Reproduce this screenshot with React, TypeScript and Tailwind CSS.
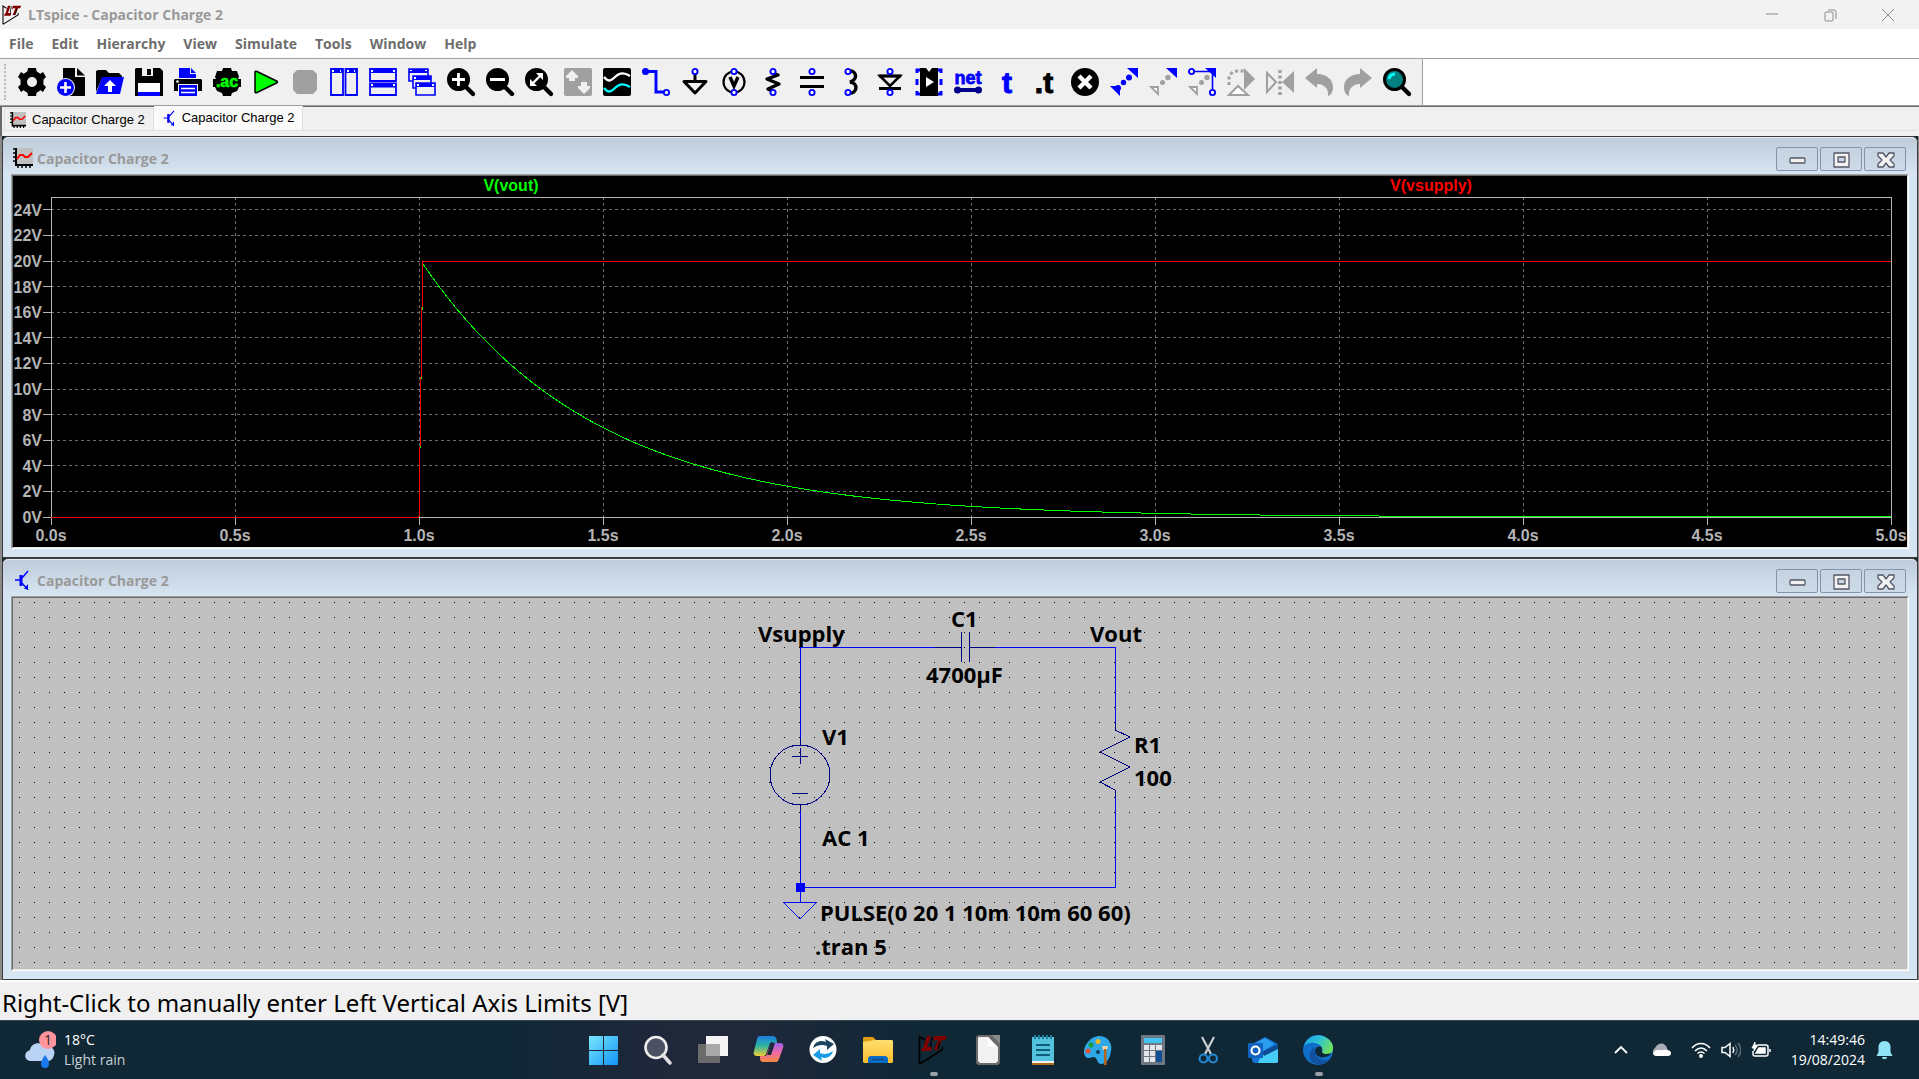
import React from 'react';
import type { ReactNode } from 'react';

const BLUE = '#0000ff';
const GRAY = '#a0a0a0';

const menus = ['File', 'Edit', 'Hierarchy', 'View', 'Simulate', 'Tools', 'Window', 'Help'];

/* ---------- small logos ---------- */

const LtLogo = ({ className }: { className: string }) => (
    <svg viewBox="0 0 30 30" className={className} fill="none">
        <path d="M1.5 29V1.5L7 5M1.5 29L24 15l.5-3" stroke="#000" strokeWidth="1.6" />
        <path d="M9 1h4L9 12h5l-1 4H3l1-3h1zM16 1h13l-2 4h-3l-4 10h-4l4-10h-3l-2 2z" fill="#800000" />
        <path d="M13 12c-1-4 0-7 2-10M20 14l2-8" stroke="#000" strokeWidth="1.2" />
    </svg>
);

const WaveIcon = ({ className }: { className: string }) => (
    <svg viewBox="0 0 20 20" className={className} fill="none">
        <path d="M4 0h16v16H4z" fill="#c0c0c0" />
        <path d="M3 0v18M2 17h18" stroke="#000" strokeWidth="2" />
        <path d="M0 1h3M0 5h3M0 9h3M0 13h3M5 17v3M9 17v3M13 17v3M17 17v3" stroke="#000" strokeWidth="1.5" />
        <path d="M4 11l3-4h3l2 2h3l4-4" stroke="#f00" strokeWidth="2" />
    </svg>
);

const TransistorIcon = ({ className }: { className: string }) => (
    <svg viewBox="0 0 20 20" className={className} fill="none" stroke={BLUE}>
        <path d="M2 10h6M9 8l6-7M9 13l6 7" strokeWidth="1.4" />
        <path d="M8 5v11" strokeWidth="3" />
        <path d="M15 14v5h-4z" fill={BLUE} stroke="none" />
    </svg>
);

/* ---------- toolbar ---------- */

const Pin = ({ x = 14, y }: { x?: number; y: number }) => (
    <circle cx={x} cy={y} r="2.6" fill="#fff" stroke={BLUE} strokeWidth="1.9" />
);

const Lens = ({ children, fill = '#000' }: { children?: ReactNode; fill?: string }) => (
    <>
        <path d="M18 18l8 8" stroke="#000" strokeWidth="4.4" strokeLinecap="round" />
        <circle cx="11.5" cy="11.5" r="10" fill={fill} stroke="#000" strokeWidth="3" />
        {children}
    </>
);

const tools: { name: string; icon: ReactNode }[] = [
    {
        name: 'Settings',
        icon: (
            <>
                <g fill="#000">
                    <circle cx="14" cy="14" r="11.5" />
                    <path d="M10 0h8l1 6H9zM10 28h8l1-6H9zM0 9l3-5 6 4-4 6zM28 9l-3-5-6 4 4 6zM0 19l3 5 6-4-4-6zM28 19l-3 5-6-4 4-6z" />
                </g>
                <circle cx="14" cy="14" r="5" fill="#f0f0f0" />
            </>
        ),
    },
    {
        name: 'New schematic',
        icon: (
            <>
                <path d="M6 0h12v9h10v19H6z" fill="#000" />
                <path d="M20 0l8 7.5h-8z" fill="#000" />
                <circle cx="8.5" cy="19.5" r="9.5" fill="#f0f0f0" />
                <circle cx="8.5" cy="19.5" r="8.5" fill={BLUE} />
                <path d="M8.5 14v11M3 19.5h11" stroke="#fff" strokeWidth="2.6" />
            </>
        ),
    },
    {
        name: 'Open',
        icon: (
            <>
                <path d="M0 24V3l2-1h8l3 3h10l3 3v2H6z" fill="#000" />
                <path d="M6 9h22l-4 17H0z" fill={BLUE} />
                <path d="M14 12l6 6h-4v6h-4v-6H8z" fill="#fff" />
            </>
        ),
    },
    {
        name: 'Save',
        icon: (
            <>
                <path d="M0 1l1-1h24l3 3v25H0z" fill="#000" />
                <path d="M7 0h11v8H7z" fill="#f0f0f0" />
                <path d="M12 1h4v6h-4z" fill="#000" />
                <path d="M3 15h22v9H3z" fill="#fff" />
                <path d="M3 24h22v4H3z" fill={BLUE} />
            </>
        ),
    },
    {
        name: 'Print',
        icon: (
            <>
                <path d="M5 0h11v6h6v4H5z" fill={BLUE} />
                <path d="M17 0l5 5h-5z" fill={BLUE} />
                <path d="M1 11h26l1 1v11h-4v-7H4v7H0V12z" fill="#000" />
                <circle cx="3.5" cy="13.5" r="1.3" fill="#fff" />
                <path d="M5 17h18v11H5z" fill={BLUE} />
                <path d="M7 20.5h14M7 24.5h14" stroke="#fff" strokeWidth="1.4" />
            </>
        ),
    },
    {
        name: 'Configure analysis',
        icon: (
            <>
                <path d="M10 0h8l1 3h5l2 6-1 2h3v8h-2l-2 4-5 2-1 3h-8l-1-3-5-2-2-4H0v-8h3L2 9l2-6h5z" fill="#000" />
                <text
                    x="14"
                    y="19"
                    textAnchor="middle"
                    fontSize="16"
                    fontWeight="bold"
                    fill="#0f0"
                    stroke="#0f0"
                    strokeWidth="0.6"
                    fontFamily="Liberation Sans, sans-serif"
                >
                    .ac
                </text>
            </>
        ),
    },
    {
        name: 'Run',
        icon: <path d="M3 4.5q0-2 2-1l19.500 9.500q2 1 0 2L5 24.500q-2 1-2-1z" fill="#0f0" stroke="#000" strokeWidth="1.5" />,
    },
    {
        name: 'Stop',
        icon: <path d="M6 2h16l4 4v16l-4 4H6l-4-4V6z" fill={GRAY} />,
    },
    {
        name: 'Tile vertically',
        icon: (
            <>
                <path d="M1 1h12v26H1zM15.5 1H27v26H15.5z" fill="#f0f0f0" stroke={BLUE} strokeWidth="1.8" />
                <path d="M1 1h12v4H1zM15.5 1H27v4H15.5z" fill={BLUE} />
                <path d="M2 2h2v2H2zM17 2h2v2h-2zM10 2h1v2h-1zM24 2h1v2h-1z" fill="#fff" />
            </>
        ),
    },
    {
        name: 'Tile horizontally',
        icon: (
            <>
                <path d="M1 1h26v12H1zM1 15.5h26V27H1z" fill="#f0f0f0" stroke={BLUE} strokeWidth="1.8" />
                <path d="M1 1h26v4H1zM1 15.5h26v4H1z" fill={BLUE} />
                <path d="M2 2h2v2H2zM2 16h2v2H2zM24 2h2v2h-2zM24 16h2v2h-2z" fill="#fff" />
            </>
        ),
    },
    {
        name: 'Cascade',
        icon: (
            <>
                <g fill="#f0f0f0" stroke={BLUE} strokeWidth="1.6">
                    <path d="M1 1h19v12H1z" />
                    <path d="M5 8h18v12H5z" />
                    <path d="M8 15h19v12H8z" />
                </g>
                <path d="M1 1h19v4H1zM5 8h18v4H5zM8 15h19v4H8z" fill={BLUE} />
                <path d="M2 2h2v1H2zM6 9h2v2H6zM9 16h2v2H9zM17 2h2v1h-2zM24 16h2v2h-2z" fill="#fff" />
            </>
        ),
    },
    {
        name: 'Zoom in',
        icon: (
            <Lens>
                <path d="M11.5 5v13M5 11.5h13" stroke="#fff" strokeWidth="2.8" />
            </Lens>
        ),
    },
    {
        name: 'Zoom out',
        icon: (
            <Lens>
                <path d="M4 11.5h15" stroke="#fff" strokeWidth="3" />
            </Lens>
        ),
    },
    {
        name: 'Zoom to fit',
        icon: (
            <Lens>
                <path d="M8 15l7-7" stroke="#fff" strokeWidth="2.4" />
                <path d="M11 5h7v7zM5 11v7h7z" fill="#fff" />
            </Lens>
        ),
    },
    {
        name: 'Autorange',
        icon: (
            <>
                <rect width="28" height="28" rx="2" fill={GRAY} />
                <path d="M8 2l6 6v2h-3v3H5v-3H2V8zM20 26l-6-6v-2h3v-4h6v4h3v2z" fill="#f0f0f0" />
            </>
        ),
    },
    {
        name: 'Waveform viewer',
        icon: (
            <>
                <rect width="28" height="28" rx="2" fill="#000" />
                <path d="M1 9c5 6 8 3 11 0s7-6 15-1" fill="none" stroke="#fff" strokeWidth="2.4" />
                <path d="M1 20c5 6 8 3 11 0s7-6 15-1" fill="none" stroke="#0ff" strokeWidth="2.4" />
            </>
        ),
    },
    {
        name: 'Wire',
        icon: (
            <>
                <path d="M3 3.5h11V24h8" fill="none" stroke={BLUE} strokeWidth="3" />
                <circle cx="3.5" cy="3.5" r="3.5" fill={BLUE} />
                <Pin x={24.5} y={24.5} />
            </>
        ),
    },
    {
        name: 'Ground',
        icon: (
            <>
                <path d="M14 5v9" stroke="#000" strokeWidth="3" />
                <path d="M3 13.5h22L14 25z" fill="none" stroke="#000" strokeWidth="3" strokeLinejoin="round" />
                <Pin y={3.5} />
            </>
        ),
    },
    {
        name: 'Voltage source',
        icon: (
            <>
                <circle cx="14" cy="14" r="10.5" fill="none" stroke="#000" strokeWidth="2.2" />
                <path d="M10 9l4 9 4-9" fill="none" stroke="#000" strokeWidth="3.4" />
                <Pin y={3.5} />
                <Pin y={24.5} />
            </>
        ),
    },
    {
        name: 'Resistor',
        icon: (
            <>
                <path d="M14 5l5 2-11 4 12 5-11 5 6 3" fill="none" stroke="#000" strokeWidth="3.4" strokeLinejoin="round" />
                <Pin y={3.5} />
                <Pin y={24.5} />
            </>
        ),
    },
    {
        name: 'Capacitor',
        icon: (
            <>
                <path d="M2 9.5h24M2 18.5h24" stroke="#000" strokeWidth="3.2" />
                <Pin y={3.5} />
                <Pin y={24.5} />
            </>
        ),
    },
    {
        name: 'Inductor',
        icon: (
            <>
                <path d="M12 3c8-1 9 9 1 11c9 1 7 12-1 11" fill="none" stroke="#000" strokeWidth="3.4" />
                <Pin x={11} y={3.5} />
                <Pin x={11} y={24.5} />
            </>
        ),
    },
    {
        name: 'Diode',
        icon: (
            <>
                <path d="M4 8h20l-10 10z" fill="none" stroke="#000" strokeWidth="2.6" />
                <path d="M3 8h22M3 20.5h22" stroke="#000" strokeWidth="3" />
                <Pin y={3.5} />
                <Pin y={24.5} />
            </>
        ),
    },
    {
        name: 'Component',
        icon: (
            <>
                <path d="M2 5V2h4M2 11v6M2 23v3h4M26 5V2h-4M26 11v6M26 23v3h-4" fill="none" stroke={BLUE} strokeWidth="3" />
                <path d="M5 0h6l3 4 3-4h6v28H5z" fill="#000" />
                <path d="M11 9v10l8-5z" fill="#fff" />
            </>
        ),
    },
    {
        name: 'Net name',
        icon: (
            <>
                <text
                    x="14"
                    y="16"
                    textAnchor="middle"
                    fontSize="18"
                    fontWeight="bold"
                    fill={BLUE}
                    stroke={BLUE}
                    strokeWidth="0.8"
                    fontFamily="Liberation Sans, sans-serif"
                >
                    net
                </text>
                <path d="M3 22h22" stroke="#00008b" strokeWidth="4" />
                <circle cx="3.5" cy="22" r="3.5" fill="#00008b" />
                <circle cx="24.5" cy="22" r="3.5" fill="#00008b" />
            </>
        ),
    },
    {
        name: 'Text',
        icon: (
            <text
                x="14"
                y="25"
                textAnchor="middle"
                fontSize="30"
                fontWeight="bold"
                fill={BLUE}
                stroke={BLUE}
                fontFamily="Liberation Sans, sans-serif"
            >
                t
            </text>
        ),
    },
    {
        name: 'SPICE directive',
        icon: (
            <text
                x="12"
                y="25"
                textAnchor="middle"
                fontSize="30"
                fontWeight="bold"
                fill="#000"
                stroke="#000"
                fontFamily="Liberation Sans, sans-serif"
            >
                .t
            </text>
        ),
    },
    {
        name: 'Delete',
        icon: (
            <>
                <circle cx="14" cy="14" r="14" fill="#000" />
                <path d="M8 8l12 12M20 8L8 20" stroke="#fff" strokeWidth="4.4" />
            </>
        ),
    },
    {
        name: 'Move',
        icon: (
            <g fill={BLUE}>
                <path d="M17 0h11v10zM0 18h10v10z" />
                <circle cx="19" cy="9.5" r="3" />
                <circle cx="13.5" cy="14.5" r="2.7" />
                <circle cx="8" cy="20" r="3" />
            </g>
        ),
    },
    {
        name: 'Copy',
        icon: (
            <>
                <path d="M17 0h11v10z" fill={BLUE} />
                <g fill={GRAY}>
                    <circle cx="19" cy="9.5" r="2.7" />
                    <circle cx="13.5" cy="14.5" r="2.5" />
                </g>
                <path d="M2 19h7v7z" fill="#fff" stroke={GRAY} strokeWidth="1.8" />
            </>
        ),
    },
    {
        name: 'Drag',
        icon: (
            <>
                <path d="M17 0h11v10z" fill={BLUE} />
                <path d="M4 3.5h20.5V24" fill="none" stroke={BLUE} strokeWidth="1.6" />
                <g fill={GRAY}>
                    <circle cx="19" cy="9.5" r="2.7" />
                    <circle cx="13.5" cy="14.5" r="2.5" />
                </g>
                <path d="M2 19h7v7z" fill="#fff" stroke={GRAY} strokeWidth="1.8" />
                <Pin x={3.5} y={3.5} />
                <Pin x={24.5} y={24.5} />
            </>
        ),
    },
    {
        name: 'Rotate',
        icon: (
            <>
                <path d="M17 0l11 11-11 11z" fill={GRAY} />
                <path d="M2 17v-6c0-5 4-8 9-8h6" fill="none" stroke={GRAY} strokeWidth="3" strokeDasharray="3 2.5" />
                <path d="M2 27l9-9 10 9z" fill="#fff" stroke={GRAY} strokeWidth="2" />
            </>
        ),
    },
    {
        name: 'Mirror',
        icon: (
            <>
                <path d="M14 2v25" stroke={GRAY} strokeWidth="3.5" strokeDasharray="3 2.5" />
                <path d="M1 5l9 9-9 10z" fill="#f0f0f0" stroke={GRAY} strokeWidth="2" />
                <path d="M28 3v22L16 14z" fill={GRAY} />
            </>
        ),
    },
    {
        name: 'Undo',
        icon: <path d="M0 10L12 0v6c10 0 16 6 16 13 0 5-2 8-5 9 1-6-3-12-11-12v4z" fill={GRAY} />,
    },
    {
        name: 'Redo',
        icon: <path d="M28 10L16 0v6C6 6 0 12 0 19c0 5 2 8 5 9-1-6 3-12 11-12v4z" fill={GRAY} />,
    },
    {
        name: 'Find',
        icon: (
            <Lens fill="#008080">
                <path d="M6 11q1-5 6-5" fill="none" stroke="#0ff" strokeWidth="3" />
            </Lens>
        ),
    },
];

const Toolbar = () => (
    <div className="flex h-12 shrink-0 border-b border-[#696969] bg-white">
        <div className="flex items-center gap-[11px] border-b border-r border-[#a0a0a0] bg-[#f0f0f0] pr-[11px]">
            <span className="ml-1 h-9 w-[3px] border-l-2 border-dotted border-[#b8b8b8]" />
            {tools.map((tool) => (
                <button key={tool.name} aria-label={tool.name} className="size-7">
                    <svg viewBox="0 0 28 28" className="size-7 overflow-visible">
                        {tool.icon}
                    </svg>
                </button>
            ))}
        </div>
        <div className="flex-1 border-b border-[#a0a0a0]" />
    </div>
);

/* ---------- MDI child window ---------- */

const frameButtons = [
    { name: 'Minimize', icon: <rect x="3" y="9" width="15" height="5" rx="1" /> },
    { name: 'Restore', icon: <path fillRule="evenodd" d="M3 4h15v14H3zM7 8h7v5H7z" /> },
    {
        name: 'Close',
        icon: <path d="M3 4h5l3 4 3-4h5v3l-4 4 4 4v3h-5l-3-4-3 4H3v-3l4-4-4-4z" />,
    },
];

const ChildWindow = ({ icon, children }: { icon: ReactNode; children: ReactNode }) => (
    <section className="flex flex-1 flex-col rounded-t-md border border-[#3c3c3c] bg-[#d7e4f2] px-2 pb-2">
        <header className="-mx-2 flex h-[37px] shrink-0 items-center rounded-t-md border-t border-[#e4ecf5] bg-linear-to-b from-[#bfccda] to-[#d7e4f2] pl-[10px] pr-[11px]">
            {icon}
            <h2 className="ml-1 flex-1 pt-[6px] font-['Open_Sans',sans-serif] text-[14px] font-bold leading-5 text-[#999]">
                Capacitor Charge 2
            </h2>
            <div className="flex gap-[2px] pt-[6px]">
                {frameButtons.map((b) => (
                    <button
                        key={b.name}
                        aria-label={b.name}
                        className="flex h-6 w-[42px] items-center justify-center rounded-[2px] border border-[#8593ad] bg-[#c6d3e1]/50"
                    >
                        <svg viewBox="0 0 21 21" className="size-[21px]" fill="#f2f2f2" stroke="#535666" strokeWidth="1.3" strokeLinejoin="round">
                            {b.icon}
                        </svg>
                    </button>
                ))}
            </div>
        </header>
        <div className="flex flex-1 border border-b-white border-l-[#a0a0a0] border-r-white border-t-[#a0a0a0]">
            <div className="flex flex-1 border border-b-[#e3e3e3] border-l-[#696969] border-r-[#e3e3e3] border-t-[#696969]">{children}</div>
        </div>
    </section>
);

/* ---------- waveform plot ---------- */

const X_MAX = 5;
const Y_MAX = 25;
const TAU = 0.47; // R * C

const px = (t: number) => `${(t / X_MAX) * 100}%`;
const py = (v: number) => `${(1 - v / Y_MAX) * 100}%`;

const times = Array.from({ length: 11 }, (_, i) => i * 0.5);
const volts = Array.from({ length: 13 }, (_, i) => i * 2);

const decay = Array.from({ length: 200 }, (_, i) => {
    const t = 1.01 + i * 0.02;
    return `${t.toFixed(2)},${(Y_MAX - 19.8 * Math.exp(-(t - 1.01) / TAU)).toFixed(3)}`;
});

const Plot = () => (
    <div className="flex flex-1 bg-black pb-[30px] pl-[38px] pr-4 pt-[21px]">
        <svg
            className="block h-auto w-full overflow-visible font-['Liberation_Sans',Arial,sans-serif] text-[16px] font-bold"
            shapeRendering="crispEdges"
        >
            {volts.map((v) => (
                <g key={v}>
                    {v > 0 && <line x1="0" x2="100%" y1={py(v)} y2={py(v)} stroke="#6e6e6e" strokeDasharray="3 3" />}
                    <line x1="-8" x2="0" y1={py(v)} y2={py(v)} stroke="#b4b4b4" />
                    <text x="-9" y={py(v)} dy="6" textAnchor="end" fill="#b4b4b4">
                        {v}V
                    </text>
                </g>
            ))}
            {times.map((t) => (
                <g key={t}>
                    <line x1={px(t)} x2={px(t)} y1="0" y2="100%" stroke="#6e6e6e" strokeDasharray="3 3" />
                    <svg x={px(t)} y="100%" className="overflow-visible">
                        <line y2="8" stroke="#b4b4b4" />
                        <text y="24" textAnchor="middle" fill="#b4b4b4">
                            {t.toFixed(1)}s
                        </text>
                    </svg>
                </g>
            ))}
            <rect width="100%" height="100%" fill="none" stroke="#b4b4b4" />
            <svg width="100%" height="100%" viewBox="0 0 5 25" preserveAspectRatio="none" className="overflow-visible" fill="none">
                <polyline points={`0,25 1,25 ${decay.join(' ')} 5,25`} stroke="#00ff00" vectorEffect="non-scaling-stroke" />
                <polyline points="0,25 1,25 1.01,5 5,5" stroke="#ff0000" vectorEffect="non-scaling-stroke" />
            </svg>
            <text x="25%" y="-6" textAnchor="middle" fill="#00ff00">
                V(vout)
            </text>
            <text x="75%" y="-6" textAnchor="middle" fill="#ff0000">
                V(vsupply)
            </text>
        </svg>
    </div>
);

/* ---------- schematic ---------- */

const labels = [
    { text: 'Vsupply', x: -202, y: 44 },
    { text: 'C1', x: -9, y: 29 },
    { text: 'Vout', x: 130, y: 44 },
    { text: '4700µF', x: -34, y: 85 },
    { text: 'V1', x: -138, y: 147 },
    { text: 'R1', x: 174, y: 155 },
    { text: '100', x: 174, y: 188 },
    { text: 'AC 1', x: -138, y: 248 },
    { text: 'PULSE(0 20 1 10m 10m 60 60)', x: -140, y: 323 },
    { text: '.tran 5', x: -145, y: 357 },
];

const Schematic = () => (
    <div className="flex flex-1 bg-[#c0c0c0]">
        <svg className="block h-auto w-full overflow-hidden">
            <pattern id="grid" width="15" height="15" patternUnits="userSpaceOnUse">
                <rect x="6" y="4" width="1" height="1" fill="#000" />
            </pattern>
            <rect width="100%" height="100%" fill="url(#grid)" />
            <svg x="50%" className="overflow-visible" fill="none" shapeRendering="crispEdges">
                <path d="M-160 140V49H-25M35 49H155V125M155 199V289H-160M-160 206V304" stroke={BLUE} />
                <path d="M-177 304h34l-17 17z" stroke={BLUE} />
                <rect x="-164" y="285" width="9" height="9" fill={BLUE} />
                <g stroke="#000080">
                    <path d="M-25 49H1M9 49H35M1 34v30M9 34v30" />
                    <path d="M-160 140v7M-160 206v7M-168 158h16M-160 150v16M-168 195h16" />
                    <circle cx="-160" cy="177" r="30" />
                    <path d="M155 125v7l15 7-30 15 30 15-30 15 15 8v7" />
                </g>
                <g className="font-['Open_Sans',sans-serif] text-[22px] font-bold" fill="#000">
                    {labels.map((l) => (
                        <text key={l.text} x={l.x} y={l.y}>
                            {l.text}
                        </text>
                    ))}
                </g>
            </svg>
        </svg>
    </div>
);

/* ---------- taskbar ---------- */

const apps: { name: string; open?: boolean; icon: ReactNode }[] = [
    {
        name: 'Start',
        icon: <path d="M1 1h14v14H1zM16 1h14v14H16zM1 16h14v14H1zM16 16h14v14H16z" fill="url(#win)" />,
    },
    {
        name: 'Search',
        icon: (
            <>
                <circle cx="13" cy="12.5" r="10.5" fill="#4a5263" stroke="#eee" strokeWidth="2.6" />
                <path d="M20 20l7 8" stroke="#e0e0e0" strokeWidth="3.5" strokeLinecap="round" />
            </>
        ),
    },
    {
        name: 'Task view',
        icon: (
            <>
                <path d="M8 1h22v20H8z" fill="#f4f4f4" />
                <path d="M0 9h22v19H0z" fill="#6b6b6b" />
                <path d="M8 9h14v12H8z" fill="#a9a9a9" />
            </>
        ),
    },
    {
        name: 'Copilot',
        icon: (
            <>
                <path d="M7 1h13c3 0 4 3 4 7h-7l-4 11c-1 2-2 2-4 2H4c-3 0-4-2-3-5L4 4c1-2 1-3 3-3z" fill="url(#cp1)" />
                <path d="M23 27H10c-3 0-3-3-3-6h6l4-11c1-2 2-2 4-2h6c3 0 4 2 3 5l-4 11c-1 2-1 3-3 3z" fill="url(#cp2)" />
                <path d="M14 20l4-13 4 1-4 12z" fill="#1b2a3a" />
            </>
        ),
    },
    {
        name: 'Sync',
        icon: (
            <>
                <circle cx="15" cy="14.5" r="13.5" fill="#fff" />
                <path d="M5 13c2-7 8-8 13-6l-1-3 9 5-7 6v-4c-5-2-9-1-14 2z" fill="#1c4763" />
                <path d="M25 16c-2 7-8 8-12 6l1 4-9-6 7-6v4c5 2 8 1 13-2z" fill="#1a9be8" />
            </>
        ),
    },
    {
        name: 'File Explorer',
        icon: (
            <>
                <path d="M0 3l1-1h9l3 3v6H0z" fill="#e09c10" />
                <path d="M0 7l12-2h17l1 1v21l-1 1H1l-1-1z" fill="url(#folder)" />
                <path d="M5 28v-5l2-2h16l2 2v5z" fill="#0c6cc4" />
                <path d="M9 24.5h12" stroke="#0a4a8c" strokeWidth="1.5" />
            </>
        ),
    },
    { name: 'LTspice', open: true, icon: <LtLogo className="size-[30px]" /> },
    {
        name: 'LibreOffice',
        icon: (
            <>
                <path d="M5 0h13l9 9v19l-2 2H5l-2-2V2z" fill="#6b6b6b" />
                <path d="M18 0h9v9z" fill="#8a8a8a" />
                <path d="M6 2h9l10 10v14l-2 2H7l-2-2V3z" fill="#f2f2f2" />
                <path d="M15 2v9l9 1z" fill="#fff" />
            </>
        ),
    },
    {
        name: 'Notepad',
        icon: (
            <>
                <path d="M4 2h22v24H4z" fill="#55c2dd" />
                <path d="M4 26h22v2H4z" fill="#f3f3f3" />
                <path d="M4 28h22v2H4z" fill="#b06a1a" />
                <path d="M8 10h14M8 15h14M8 20h14" stroke="#115e7a" strokeWidth="1.8" />
                <path d="M7 0v4M11 0v4M15 0v4M19 0v4M23 0v4" stroke="#1b7f9e" strokeWidth="2" />
            </>
        ),
    },
    {
        name: 'Paint',
        icon: (
            <>
                <path d="M15 1c9-1 15 7 13 15-1 8-5 13-10 13-4 0-3-6-7-7-4 0-6 3-9-1C-2 14 6 2 15 1z" fill="#2fa8e8" />
                <circle cx="5" cy="16" r="2.5" fill="#e2533b" />
                <circle cx="8" cy="10" r="2.5" fill="#1f9c3c" />
                <circle cx="15" cy="6.5" r="2.5" fill="#f2b824" />
                <circle cx="15" cy="17" r="2" fill="#0d3a55" />
                <path d="M19 11h6l-1 4h-4z" fill="#f2d3a8" />
                <path d="M21 14h2.5v16H21z" fill="#b5651d" />
            </>
        ),
    },
    {
        name: 'Calculator',
        icon: (
            <>
                <rect x="3" width="24" height="30" rx="1" fill="#6f7780" />
                <path d="M6 3h18v5H6z" fill="#45c3f2" />
                <path d="M6 10h5v5H6zM12 10h5v5h-5zM18 10h6v5h-6zM6 16h5v5H6zM12 16h5v5h-5zM6 22h5v5H6zM12 22h5v5h-5z" fill="#e3e6ea" />
                <path d="M18 16h6v11h-6z" fill="#0f4f94" />
            </>
        ),
    },
    {
        name: 'Snipping Tool',
        icon: (
            <>
                <path d="M9 2l9 17M21 2l-9 17" stroke="#c9ced3" strokeWidth="2.2" />
                <circle cx="10.5" cy="23.5" r="4" fill="none" stroke="#2187d0" strokeWidth="2.2" />
                <circle cx="20" cy="23.5" r="4" fill="none" stroke="#2187d0" strokeWidth="2.2" />
            </>
        ),
    },
    {
        name: 'Outlook',
        icon: (
            <>
                <path d="M4 9l13-7 13 7v17l-2 2H6l-2-2z" fill="#1474cf" />
                <path d="M14 18l16-7v16l-1 1H10z" fill="#45cdf8" />
                <path d="M8 8l9-5 9 6-12 8z" fill="#2d9df0" />
                <path d="M14 17l16-8v5l-14 7z" fill="#0c4a94" />
                <rect y="8" width="15" height="15" rx="1" fill="#0f62bd" />
                <circle cx="7.5" cy="15.5" r="4" fill="none" stroke="#fff" strokeWidth="2.2" />
            </>
        ),
    },
    {
        name: 'Edge',
        open: true,
        icon: (
            <>
                <circle cx="15" cy="15" r="15" fill="#0f6fc8" />
                <path d="M1 11C4 1 14-2 22 2c7 3 10 10 7 15-3 4-9 4-10 1 2-5-1-9-7-10C7 7 3 9 1 11z" fill="url(#edge)" />
                <path d="M12 12c-3 6 3 15 14 13-5 5-12 6-17 2-4-4-3-12 3-15z" fill="#1250a0" />
                <path d="M14 12c-3 2-3 8 3 10 5 1 9-1 11-3 0-1-3 0-6 0-4-1-3-3-3-5 0-3-3-3-5-2z" fill="#0f2838" />
            </>
        ),
    },
];

const Taskbar = () => (
    <footer className="relative grid h-[59px] shrink-0 grid-cols-[1fr_auto_1fr] items-stretch border-t border-[#33474f] bg-[linear-gradient(90deg,#102836_0%,#112837_27%,#20273a_35%,#1f283a_39%,#102836_48%,#102836_100%)] font-['Open_Sans',sans-serif] text-white">
        <svg className="absolute size-0">
            <defs>
                <linearGradient id="win" x1="0" y1="0" x2="1" y2="1">
                    <stop offset="0" stopColor="#7be6ff" />
                    <stop offset="1" stopColor="#0f94f5" />
                </linearGradient>
                <linearGradient id="cp1" x1="0" y1="0" x2="0" y2="1">
                    <stop offset="0" stopColor="#1b7de0" />
                    <stop offset="0.5" stopColor="#2fb5a0" />
                    <stop offset="1" stopColor="#f0d030" />
                </linearGradient>
                <linearGradient id="cp2" x1="0" y1="0" x2="0" y2="1">
                    <stop offset="0" stopColor="#9a62e8" />
                    <stop offset="0.5" stopColor="#ef6aa8" />
                    <stop offset="1" stopColor="#f58a3c" />
                </linearGradient>
                <linearGradient id="folder" x1="0" y1="0" x2="0" y2="1">
                    <stop offset="0" stopColor="#ffdf70" />
                    <stop offset="1" stopColor="#fbbd2a" />
                </linearGradient>
                <linearGradient id="edge" x1="0" y1="0" x2="1" y2="0.5">
                    <stop offset="0" stopColor="#1f9be0" />
                    <stop offset="0.5" stopColor="#2cc3d8" />
                    <stop offset="1" stopColor="#6ee060" />
                </linearGradient>
            </defs>
        </svg>
        <button className="flex items-center gap-2 pl-6 text-left text-[14px] leading-5">
            <svg viewBox="0 0 32 38" className="h-[38px] w-8">
                <path d="M7 30c-7 0-8-9-1-11 1-8 12-9 14-3 7-2 12 3 10 8-1 4-3 6-7 6z" fill="#b9d3f4" />
                <path d="M21 24c3 4 4 6 4 9a4 4 0 01-8 0c0-3 1-5 4-9z" fill="#1a78ee" />
                <circle cx="24" cy="9" r="9" fill="#ff959c" />
                <text x="24" y="14" textAnchor="middle" fontSize="14" fill="#2a2a2a">
                    1
                </text>
            </svg>
            <span>
                <span className="block">18°C</span>
                <span className="block text-[#c9d0d4]">Light rain</span>
            </span>
        </button>
        <nav className="flex pl-[3px]">
            {apps.map((app) => (
                <button key={app.name} aria-label={app.name} className="flex w-[55px] flex-col items-center pt-[14px]">
                    <svg viewBox="0 0 31 31" className="size-[31px]">
                        {app.icon}
                    </svg>
                    {app.open && <span className="mt-[6px] h-1 w-2 rounded-full bg-[#98a1a8]" />}
                </button>
            ))}
        </nav>
        <div className="flex items-center justify-end pr-[26px]">
            <button aria-label="Show hidden icons" className="mr-[22px]">
                <svg viewBox="0 0 16 16" className="size-4" fill="none" stroke="#fff" strokeWidth="1.8">
                    <path d="M2 11l6-6 6 6" />
                </svg>
            </button>
            <button aria-label="OneDrive" className="mr-5">
                <svg viewBox="0 0 20 14" className="h-[14px] w-5">
                    <path d="M4 12a4 4 0 010-7c3-6 10-6 12 0l2 7z" fill="#a8aeb3" />
                    <path d="M5 13c-3 0-4-4-1-5 4-2 6 0 8-1 3-1 8 0 8 3 0 2-1 3-3 3z" fill="#fff" />
                </svg>
            </button>
            <button aria-label="Network, volume and battery" className="mr-5 flex gap-[10px]">
                <svg viewBox="0 0 20 18" className="h-[18px] w-5" fill="none" stroke="#fff" strokeWidth="1.5">
                    <path d="M1 7c5-6 13-6 18 0M4 10c4-4 8-4 12 0M6.5 12.5c2-2 5-2 7 0" />
                    <circle cx="10" cy="15" r="1.2" fill="#fff" />
                </svg>
                <svg viewBox="0 0 20 18" className="h-[18px] w-5" fill="none" stroke="#fff" strokeWidth="1.5">
                    <path d="M1 6.5h3l5-4v13l-5-4H1zM12 6c1 2 1 4 0 6" />
                    <path d="M14 4c3 3 3 7 0 10M17 2c4 5 4 9 0 14" stroke="#5d6c76" />
                </svg>
                <svg viewBox="0 0 20 18" className="h-[18px] w-5" fill="none" stroke="#fff" strokeWidth="1.5">
                    <path d="M7 4h8q2 0 2 2v7q0 2-2 2H4q-2 0-2-2v-3M19 8v3" />
                    <path d="M8 7h6v5H5z" fill="#fff" />
                    <path d="M4 1L1 7h2v3l4-6H4z" fill="#fff" strokeWidth="0.8" />
                </svg>
            </button>
            <time className="mr-[11px] text-right text-[14px] leading-5">
                <span className="block">14:49:46</span>
                <span className="block">19/08/2024</span>
            </time>
            <button aria-label="Notifications">
                <svg viewBox="0 0 17 20" className="h-5 w-[17px]" fill="#8fe3f5">
                    <path d="M8.500 1c4 0 6 3 6 6v5l2 4H.5l2-4V7c0-3 2-6 6-6zM6 17h5c0 3-5 3-5 0z" />
                </svg>
            </button>
        </div>
    </footer>
);

/* ---------- page ---------- */

const App = () => (
    <div className="flex h-screen min-h-[640px] flex-col overflow-hidden bg-[#f0f0f0]">
        <header className="flex h-[29px] shrink-0 items-center bg-[#f2f2f2] pr-[2px] font-['Open_Sans',sans-serif] text-[14px] font-bold leading-5 text-[#999]">
            <LtLogo className="ml-[2px] size-5" />
            <h1 className="ml-[6px] flex-1">LTspice - Capacitor Charge 2</h1>
            {[
                { name: 'Minimize', d: 'M1 6h12' },
                { name: 'Restore', d: 'M2 5q0-1 1-1h6q1 0 1 1v7q0 1-1 1H3q-1 0-1-1zM5 2h6q2 0 2 2v7' },
                { name: 'Close', d: 'M1 1l12 12M13 1L1 13' },
            ].map((b) => (
                <button key={b.name} aria-label={b.name} className="flex w-[58px] justify-center">
                    <svg viewBox="0 0 14 14" className="size-[14px]" fill="none" stroke="#8c8c8c">
                        <path d={b.d} />
                    </svg>
                </button>
            ))}
        </header>
        <nav className="flex h-[30px] shrink-0 items-center border-b border-[#a0a0a0] bg-white font-['Open_Sans',sans-serif] text-[14px] font-bold leading-5 text-[#6d6d6d]">
            {menus.map((m) => (
                <button key={m} className="px-[9px]">
                    {m}
                </button>
            ))}
        </nav>
        <Toolbar />
        <div className="flex h-[29px] shrink-0 flex-col border-l-2 border-[#696969] bg-[#f0f0f0] px-[2px] font-['Liberation_Sans',Arial,sans-serif] text-[13px] leading-4 text-black">
            <div role="tablist" className="flex h-6 items-end border-b border-[#e0e0e0]">
                <button role="tab" aria-selected="false" className="flex h-[22px] items-center gap-[6px] border border-b-0 border-[#e0e0e0] pl-[5px] pr-2">
                    <WaveIcon className="size-4" />
                    Capacitor Charge 2
                </button>
                <button role="tab" aria-selected="true" className="flex h-6 items-center gap-1 border-r border-[#e0e0e0] bg-[#fafafa] pl-2 pr-2">
                    <TransistorIcon className="size-4" />
                    Capacitor Charge 2
                </button>
            </div>
        </div>
        <main className="flex flex-1 flex-col border-l-2 border-r border-[#8a8a8a] bg-[#14272c]">
            <ChildWindow icon={<WaveIcon className="mt-1 size-5" />}>
                <Plot />
            </ChildWindow>
            <ChildWindow icon={<TransistorIcon className="mt-1 size-5" />}>
                <Schematic />
            </ChildWindow>
        </main>
        <div
            role="status"
            className="flex h-10 shrink-0 items-center border-t-2 border-white bg-[#f0f0f0] pl-[2px] pt-1 font-['Noto_Sans',sans-serif] text-[24px] leading-7 text-black"
        >
            Right-Click to manually enter Left Vertical Axis Limits [V]
        </div>
        <Taskbar />
    </div>
);

export default App;
